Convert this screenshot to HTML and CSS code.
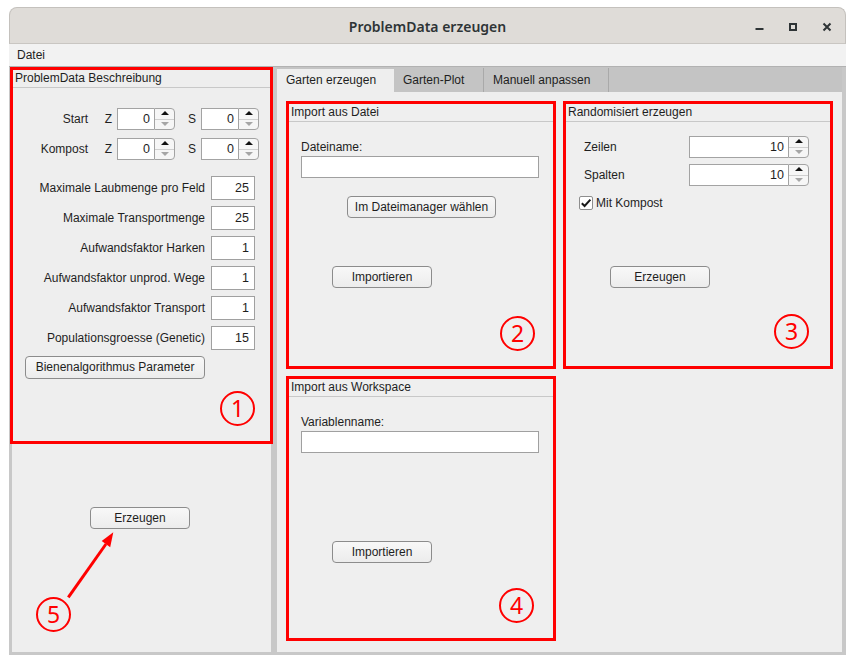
FILE: index.html
```html
<!DOCTYPE html>
<html>
<head>
<meta charset="utf-8">
<title>ProblemData erzeugen</title>
<link rel="stylesheet" href="styles.css">
</head>
<body>
<div class="window">
  <div class="titlebar">
    <div></div>
    <div class="title">ProblemData erzeugen</div>
    <div class="wm">
      <svg width="16" height="16" viewBox="0 0 16 16"><rect x="4.5" y="9" width="8" height="2" fill="#2e3436"/></svg>
      <svg width="16" height="16" viewBox="0 0 16 16"><rect x="5" y="5" width="6" height="6" fill="none" stroke="#2e3436" stroke-width="2"/></svg>
      <svg width="16" height="16" viewBox="0 0 16 16"><path d="M4.5 4.5 L11.5 11.5 M11.5 4.5 L4.5 11.5" stroke="#2e3436" stroke-width="2"/></svg>
    </div>
  </div>
  <div class="menubar"><span class="menu">Datei</span></div>
  <div class="main">
    <div class="leftcol">
      <section class="panel p1">
        <div class="ptitle">ProblemData Beschreibung</div>
        <div class="p1body">
          <div class="spinrow first">
            <span class="slbl">Start</span><span class="axis">Z</span>
            <div class="spin sm"><span class="sv">0</span><span class="sb"><i class="up"></i><i class="dn"></i></span></div>
            <span class="axis s">S</span>
            <div class="spin sm"><span class="sv">0</span><span class="sb"><i class="up"></i><i class="dn"></i></span></div>
          </div>
          <div class="spinrow">
            <span class="slbl">Kompost</span><span class="axis">Z</span>
            <div class="spin sm"><span class="sv">0</span><span class="sb"><i class="up"></i><i class="dn"></i></span></div>
            <span class="axis s">S</span>
            <div class="spin sm"><span class="sv">0</span><span class="sb"><i class="up"></i><i class="dn"></i></span></div>
          </div>
          <div class="fields">
            <div class="frow"><span class="flbl">Maximale Laubmenge pro Feld</span><span class="num">25</span></div>
            <div class="frow"><span class="flbl">Maximale Transportmenge</span><span class="num">25</span></div>
            <div class="frow"><span class="flbl">Aufwandsfaktor Harken</span><span class="num">1</span></div>
            <div class="frow"><span class="flbl">Aufwandsfaktor unprod. Wege</span><span class="num">1</span></div>
            <div class="frow"><span class="flbl">Aufwandsfaktor Transport</span><span class="num">1</span></div>
            <div class="frow"><span class="flbl">Populationsgroesse (Genetic)</span><span class="num">15</span></div>
          </div>
          <div class="btn bien">Bienenalgorithmus Parameter</div>
        </div>
        <div class="badge b1">1</div>
      </section>
      <div class="leftbottom">
        <div class="btn erz1">Erzeugen</div>
        <div class="badge b5">5</div>
        <svg class="arrow" width="60" height="80" viewBox="0 0 60 80">
          <line x1="8.3" y1="72.3" x2="46" y2="19" stroke="#ff0000" stroke-width="3"/>
          <polygon points="53.3,7.3 50.2,22.3 41.7,16" fill="#ff0000"/>
        </svg>
      </div>
    </div>
    <div class="rightcol">
      <div class="tabs">
        <div class="tab active">Garten erzeugen</div>
        <div class="tab t2">Garten-Plot</div>
        <div class="tab t3">Manuell anpassen</div>
      </div>
      <div class="tabcontent">
        <section class="panel p2">
          <div class="ptitle">Import aus Datei</div>
          <div class="pbody">
            <div class="flabel">Dateiname:</div>
            <div class="tinput"></div>
            <div class="btn dm">Im Dateimanager wählen</div>
            <div class="btn imp">Importieren</div>
          </div>
          <div class="badge b2">2</div>
        </section>
        <section class="panel p3">
          <div class="ptitle">Randomisiert erzeugen</div>
          <div class="pbody">
            <div class="rrow first">
              <span class="rlbl">Zeilen</span>
              <div class="spin lg"><span class="sv">10</span><span class="sb"><i class="up"></i><i class="dn"></i></span></div>
            </div>
            <div class="rrow">
              <span class="rlbl">Spalten</span>
              <div class="spin lg"><span class="sv">10</span><span class="sb"><i class="up"></i><i class="dn"></i></span></div>
            </div>
            <div class="check">
              <span class="cbox"><svg width="12" height="12" viewBox="0 0 12 12"><path d="M1.8 6.2 L4.6 9 L10.4 2.6" fill="none" stroke="#1a1a1a" stroke-width="2"/></svg></span>
              <span>Mit Kompost</span>
            </div>
            <div class="btn erz3">Erzeugen</div>
          </div>
          <div class="badge b3">3</div>
        </section>
        <section class="panel p4">
          <div class="ptitle">Import aus Workspace</div>
          <div class="pbody">
            <div class="flabel">Variablenname:</div>
            <div class="tinput"></div>
            <div class="btn imp4">Importieren</div>
          </div>
          <div class="badge b4">4</div>
        </section>
      </div>
    </div>
  </div>
</div>
</body>
</html>
```

FILE: styles.css
```css
html, body {
  margin: 0;
  padding: 0;
  background: #ffffff;
}

body {
  font-family: "Liberation Sans", Arial, sans-serif;
  font-size: 12px;
  color: #1e1e1e;
}

.window {
  margin: 7px 0 0 9px;
  width: 837px;
}

.titlebar {
  box-sizing: border-box;
  height: 37px;
  background: #dfdcd8;
  border: 1px solid #c4c1bd;
  border-bottom: 1px solid #c9c6c2;
  border-radius: 8px 8px 0 0;
  display: grid;
  grid-template-columns: 1fr auto 1fr;
  align-items: center;
}

.title {
  font-family: "Noto Sans", "DejaVu Sans", sans-serif;
  font-weight: 600;
  font-size: 14px;
  color: #2e3436;
  padding-top: 1px;
}

.wm {
  display: flex;
  justify-content: flex-end;
  gap: 18px;
  padding-right: 10px;
  padding-top: 2px;
}

.wm svg {
  display: block;
}

.menubar {
  height: 22px;
  background: #f2f2f2;
  border-bottom: 1px solid #b2b2b2;
  display: flex;
  align-items: center;
}

.menu {
  margin-left: 8px;
}

.main {
  display: flex;
  height: 588px;
}

.leftcol {
  width: 265px;
  display: flex;
  flex-direction: column;
  background: #c8c8c8;
}

.panel {
  position: relative;
  box-sizing: border-box;
  border: 3px solid #ff0000;
  background: #efefef;
}

.ptitle {
  height: 17px;
  line-height: 17px;
  padding-left: 2px;
  border-bottom: 1px solid #c8c8c8;
  white-space: nowrap;
}

.p1 {
  margin-left: 1px;
  width: 263px;
  height: 377px;
  background: #eeeeee;
}

.p1body {
  display: flex;
  flex-direction: column;
  align-items: flex-start;
}

.spinrow {
  display: flex;
  align-items: center;
  height: 22px;
  margin-top: 8px;
}

.spinrow.first {
  margin-top: 20px;
}

.slbl {
  width: 75px;
  text-align: right;
}

.axis {
  width: 24px;
  padding-right: 5px;
  text-align: right;
}

.axis.s {
  width: 21px;
}

.spin {
  display: flex;
  height: 22px;
  box-sizing: border-box;
}

.spin.sm {
  width: 58px;
}

.spin.lg {
  width: 120px;
}

.sv {
  flex: 1;
  background: #ffffff;
  border: 1px solid #a3a3a3;
  border-right: none;
  text-align: right;
  padding-right: 4px;
  line-height: 20px;
  font-size: 12.5px;
}

.sb {
  width: 21px;
  box-sizing: border-box;
  border: 1px solid #a3a3a3;
  border-radius: 0 4px 4px 0;
  background: #f6f6f6;
  display: flex;
  flex-direction: column;
}

.sb i {
  flex: 1;
  display: flex;
  align-items: center;
  justify-content: center;
  position: relative;
}

.sb i.up {
  border-bottom: 1px solid #cfcfcf;
}

.sb i.up::before {
  content: "";
  border-left: 4px solid transparent;
  border-right: 4px solid transparent;
  border-bottom: 4px solid #111111;
  margin-bottom: 1px;
}

.sb i.dn::before {
  content: "";
  border-left: 4px solid transparent;
  border-right: 4px solid transparent;
  border-top: 4px solid #a6a6a6;
  margin-top: -1px;
}

.fields {
  margin-top: 16px;
  display: flex;
  flex-direction: column;
  gap: 6px;
}

.frow {
  display: flex;
  align-items: center;
  gap: 6px;
  height: 24px;
}

.flbl {
  width: 192px;
  text-align: right;
  white-space: nowrap;
}

.num {
  width: 44px;
  height: 24px;
  box-sizing: border-box;
  background: #ffffff;
  border: 1px solid #a0a0a0;
  text-align: right;
  padding-right: 5px;
  line-height: 22px;
  font-size: 12.5px;
}

.btn {
  box-sizing: border-box;
  height: 22px;
  border: 1px solid #8c8c8c;
  border-radius: 4px;
  background: linear-gradient(#f8f8f8, #ececec);
  text-align: center;
  line-height: 20px;
  white-space: nowrap;
}

.bien {
  margin: 6px 0 0 12px;
  width: 180px;
  height: 23px;
  line-height: 21px;
}

.leftbottom {
  position: relative;
  flex: 1;
  margin: 0 3px 3px 3px;
  background: #eeeeee;
}

.erz1 {
  margin: 63px 0 0 78px;
  width: 100px;
}

.badge {
  position: absolute;
  width: 35px;
  height: 35px;
  box-sizing: border-box;
  border: 2.5px solid #ff0000;
  border-radius: 50%;
  color: #ff0000;
  font-family: "Noto Sans", "DejaVu Sans", sans-serif;
  font-size: 23px;
  line-height: 31px;
  text-align: center;
}

.b1 { left: 207px; top: 321px; }
.b2 { left: 211px; top: 212px; }
.b3 { left: 208px; top: 210px; }
.b4 { left: 210px; top: 209px; }
.b5 { left: 24px; top: 153px; }

.arrow {
  position: absolute;
  left: 48px;
  top: 81px;
}

.rightcol {
  width: 572px;
  box-sizing: border-box;
  border-left: 3px solid #c8c8c8;
  border-right: 4px solid #c8c8c8;
  border-bottom: 3px solid #c8c8c8;
  display: flex;
  flex-direction: column;
  background: #eeeeee;
}

.tabs {
  height: 25px;
  background: #c4c4c4;
  display: flex;
  align-items: flex-end;
}

.tab {
  box-sizing: border-box;
  height: 24px;
  line-height: 24px;
  padding-left: 9px;
  border-right: 1px solid #a9a9a9;
  white-space: nowrap;
}

.tab.active {
  width: 117px;
  height: 23px;
  line-height: 22px;
  background: #eeeeee;
  border-right: none;
}

.tab.t2 {
  width: 90px;
}

.tab.t3 {
  width: 125px;
}

.tabcontent {
  flex: 1;
  padding: 9px 0 0 9px;
  display: grid;
  grid-template-columns: 270px 270px;
  grid-template-rows: 268px 265px;
  column-gap: 7px;
  row-gap: 7px;
}

.pbody {
  display: flex;
  flex-direction: column;
  align-items: flex-start;
}

.flabel {
  margin: 18px 0 0 12px;
  line-height: 14px;
}

.tinput {
  margin: 2px 0 0 12px;
  width: 238px;
  height: 22px;
  box-sizing: border-box;
  background: #ffffff;
  border: 1px solid #a0a0a0;
}

.dm {
  margin: 18px 0 0 58px;
  width: 149px;
}

.imp {
  margin: 48px 0 0 43px;
  width: 100px;
}

.imp4 {
  margin: 88px 0 0 43px;
  width: 100px;
}

.rrow {
  display: flex;
  align-items: center;
  margin-top: 6px;
  margin-left: 18px;
}

.rrow.first {
  margin-top: 14px;
}

.rlbl {
  width: 105px;
}

.check {
  display: flex;
  align-items: center;
  gap: 3px;
  margin: 10px 0 0 13px;
}

.cbox {
  width: 14px;
  height: 14px;
  box-sizing: border-box;
  border: 1px solid #8e8e8e;
  border-radius: 2px;
  background: #ffffff;
  display: flex;
  align-items: center;
  justify-content: center;
}

.cbox svg {
  display: block;
}

.erz3 {
  margin: 56px 0 0 44px;
  width: 100px;
}
```
